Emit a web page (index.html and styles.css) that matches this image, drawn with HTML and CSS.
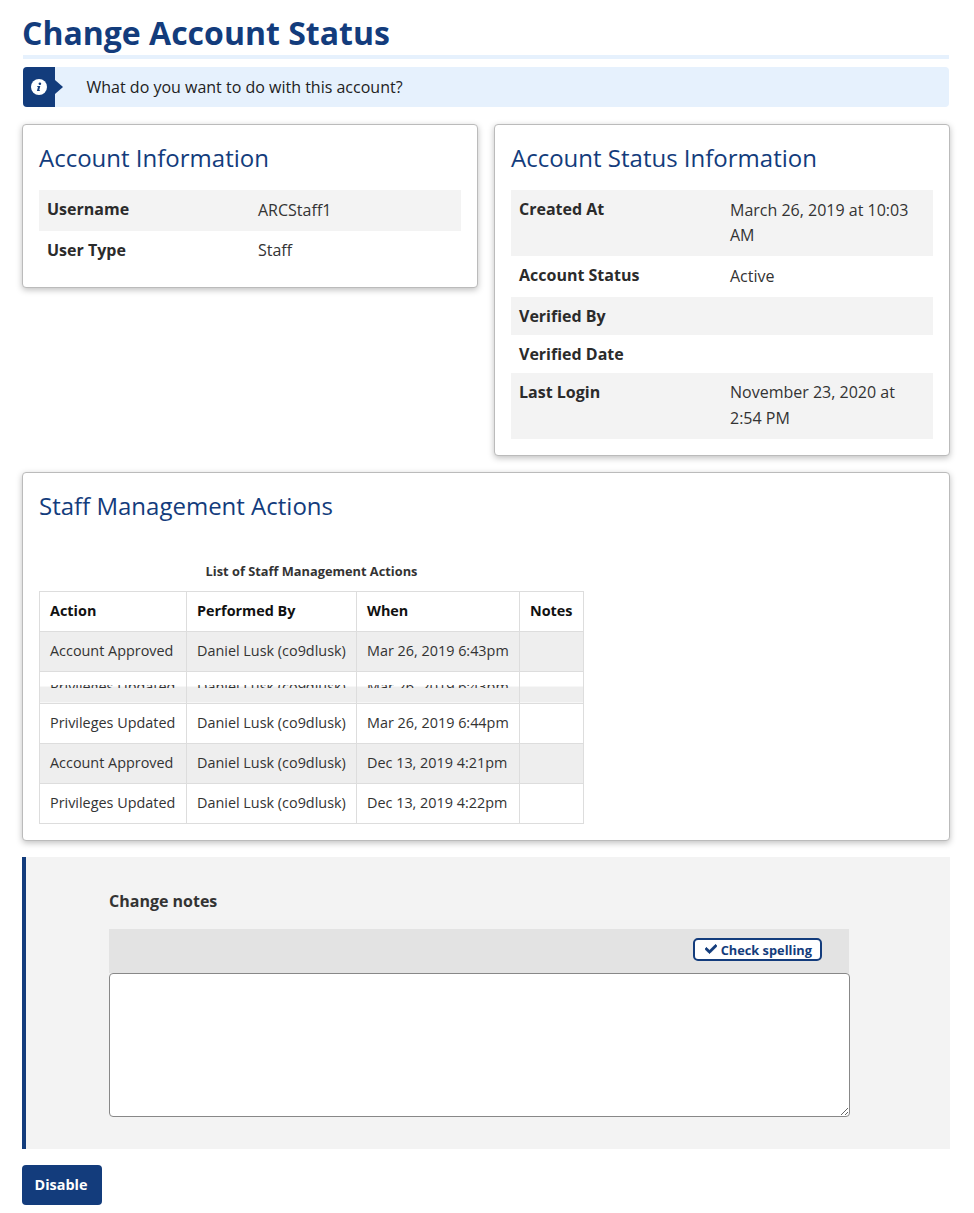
FILE: index.html
```html
<!DOCTYPE html>
<html lang="en">
<head>
    <meta charset="UTF-8">
    <title>Change Account Status</title>
    <link rel="stylesheet" href="styles.css">
</head>
<body>

    <h1 class="page-title">Change Account Status</h1>

    <div class="alert">
        <div class="alert-icon">
            <svg width="16" height="16" viewBox="0 0 16 16">
                <circle cx="8" cy="8" r="8" fill="#fff"/>
                <circle cx="8.9" cy="4.7" r="1.3" fill="#133c7c"/>
                <path d="M6.4 7h2.9l-1.1 4.2h.9l-.2.9H5.9l1.1-4.2h-.8z" fill="#133c7c"/>
            </svg>
        </div>
        <p class="alert-text">What do you want to do with this account?</p>
    </div>

    <div class="card-row">
        <div class="card">
            <h2 class="card-title">Account Information</h2>
            <table class="info-table">
                <tr><th>Username</th><td>ARCStaff1</td></tr>
                <tr><th>User Type</th><td>Staff</td></tr>
            </table>
        </div>
        <div class="card">
            <h2 class="card-title">Account Status Information</h2>
            <table class="info-table">
                <tr><th>Created At</th><td>March 26, 2019 at 10:03 AM</td></tr>
                <tr><th>Account Status</th><td>Active</td></tr>
                <tr><th>Verified By</th><td></td></tr>
                <tr><th>Verified Date</th><td></td></tr>
                <tr><th>Last Login</th><td>November 23, 2020 at 2:54 PM</td></tr>
            </table>
        </div>
    </div>

    <div class="card card-wide">
        <h2 class="card-title">Staff Management Actions</h2>
        <table class="actions-table">
            <caption>List of Staff Management Actions</caption>
            <colgroup>
                <col class="col-action">
                <col class="col-by">
                <col class="col-when">
                <col class="col-notes">
            </colgroup>
            <thead>
                <tr><th>Action</th><th>Performed By</th><th>When</th><th>Notes</th></tr>
            </thead>
            <tbody>
                <tr class="odd">
                    <td>Account Approved</td><td>Daniel Lusk (co9dlusk)</td><td>Mar 26, 2019 6:43pm</td><td></td>
                </tr>
                <!-- this row is torn in half in the original capture -->
                <tr class="torn">
                    <td><div>Privileges Updated</div></td><td><div>Daniel Lusk (co9dlusk)</div></td><td><div>Mar 26, 2019 6:43pm</div></td><td></td>
                </tr>
                <tr>
                    <td>Privileges Updated</td><td>Daniel Lusk (co9dlusk)</td><td>Mar 26, 2019 6:44pm</td><td></td>
                </tr>
                <tr class="odd">
                    <td>Account Approved</td><td>Daniel Lusk (co9dlusk)</td><td>Dec 13, 2019 4:21pm</td><td></td>
                </tr>
                <tr>
                    <td>Privileges Updated</td><td>Daniel Lusk (co9dlusk)</td><td>Dec 13, 2019 4:22pm</td><td></td>
                </tr>
            </tbody>
        </table>
    </div>

    <div class="notes-panel">
        <label class="notes-label" for="notes">Change notes</label>
        <div class="notes-toolbar">
            <button class="spell-btn">
                <svg class="spell-icon" width="12" height="12" viewBox="0 0 512 512"><path fill="#133c7c" stroke="#133c7c" stroke-width="30" d="M173.898 439.404l-166.4-166.4c-9.997-9.997-9.997-26.206 0-36.204l36.203-36.204c9.997-9.998 26.207-9.998 36.204 0L192 312.69 432.095 72.596c9.997-9.997 26.207-9.997 36.204 0l36.203 36.204c9.997 9.997 9.997 26.206 0 36.204l-294.4 294.401c-9.998 9.997-26.207 9.997-36.204-.001z"/></svg>
                Check spelling
            </button>
        </div>
        <textarea id="notes" class="notes-box"></textarea>
    </div>

    <button class="submit-btn">Disable</button>

</body>
</html>
```

FILE: styles.css
```css
body {
    font-family: "Open Sans", sans-serif;
    font-size: 16px;
    color: #333;
    background: #fff;
    margin: 0;
    padding: 0 24px 8px 22px;
}
.page-title {
    font-size: 32px;
    line-height: 44px;
    font-weight: 700;
    color: #133c7c;
    margin: 0 1px;
    padding: 11px 0 0;
    text-indent: -1px;
    border-bottom: 4px solid #e6f1fd;
}
.alert {
    display: flex;
    align-items: center;
    height: 40px;
    margin: 8px 1px 17px;
    background: #e6f1fd;
    border-radius: 4px;
}
.alert-icon {
    position: relative;
    display: flex;
    align-items: center;
    justify-content: center;
    width: 32px;
    height: 40px;
    background: #133c7c;
    border-radius: 4px 0 0 4px;
}
.alert-icon::after {
    content: "";
    position: absolute;
    left: 32px;
    top: 13px;
    border-left: 8px solid #133c7c;
    border-top: 7px solid transparent;
    border-bottom: 7px solid transparent;
}
.alert-text {
    margin: 0 0 0 31.5px;
    color: #222;
}
.card-row {
    display: grid;
    grid-template-columns: 1fr 1fr;
    gap: 16px;
    align-items: start;
}
.card {
    background: #fff;
    border: 1px solid #bbb;
    border-radius: 4px;
    box-shadow: 0 2px 6px rgba(0, 0, 0, 0.25);
    padding: 16px;
}
.card-title {
    font-size: 24px;
    line-height: 34px;
    font-weight: 400;
    color: #133c7c;
    margin: 0 0 15px;
}
.info-table {
    width: 100%;
    table-layout: fixed;
    border-collapse: collapse;
}
.info-table th,
.info-table td {
    padding: 7.5px 8px;
    text-align: left;
    vertical-align: top;
}
.info-table th {
    font-weight: 700;
    line-height: 23px;
    padding: 8px 8px 7px;
    color: #2b2b2b;
}
.info-table td {
    line-height: 25.5px;
}
.info-table tr:nth-child(odd) {
    background: #f3f3f3;
}
.card-wide {
    margin-top: 16px;
}
.actions-table {
    border-collapse: collapse;
    table-layout: fixed;
    width: 544px;
    font-size: 14.4px;
    margin-top: 40px;
}
.col-action {
    width: 147px;
}
.col-by {
    width: 170px;
}
.col-when {
    width: 163px;
}
.col-notes {
    width: 64px;
}
.actions-table caption {
    font-size: 12.8px;
    font-weight: 700;
    line-height: 17px;
    padding-bottom: 11px;
}
.actions-table th,
.actions-table td {
    border: 1px solid #ddd;
    padding: 9px 10px 11px;
    line-height: 19px;
    text-align: left;
    white-space: nowrap;
}
.actions-table th {
    color: #111;
    font-weight: 700;
}
.actions-table .odd td {
    background: #eee;
}
.actions-table .torn td {
    height: 18px;
    padding: 13px 10px 0;
    vertical-align: top;
    background: linear-gradient(#fff 15px, #eee 15px);
}
.actions-table .torn div {
    height: 3px;
    line-height: 3px;
    overflow: hidden;
}
.notes-panel {
    margin-top: 16px;
    padding: 32px 101px 32px 83px;
    background: #f3f3f3;
    border-left: 4px solid #133c7c;
}
.notes-label {
    display: block;
    font-weight: 700;
    line-height: 24px;
    margin-bottom: 16px;
}
.notes-toolbar {
    display: flex;
    justify-content: flex-end;
    align-items: center;
    height: 44px;
    padding-right: 27px;
    background: #e3e3e3;
}
.spell-btn {
    font-family: inherit;
    font-size: 12.8px;
    font-weight: 700;
    line-height: 18px;
    color: #133c7c;
    background: #fff;
    border: 2px solid #133c7c;
    border-radius: 5px;
    padding: 1px 8px 0 10px;
    margin-top: -2px;
}
.spell-icon {
    margin-right: 0.5px;
}
.notes-box {
    display: block;
    box-sizing: border-box;
    width: calc(100% + 1px);
    height: 144px;
    background: #fff;
    border: 1px solid #888;
    border-radius: 4px;
}
.submit-btn {
    display: block;
    margin-top: 16px;
    width: 80px;
    height: 40px;
    padding: 0 2px 0 0;
    font-family: inherit;
    font-size: 14.4px;
    font-weight: 700;
    color: #fff;
    background: #133c7c;
    border: none;
    border-radius: 4px;
}
```
